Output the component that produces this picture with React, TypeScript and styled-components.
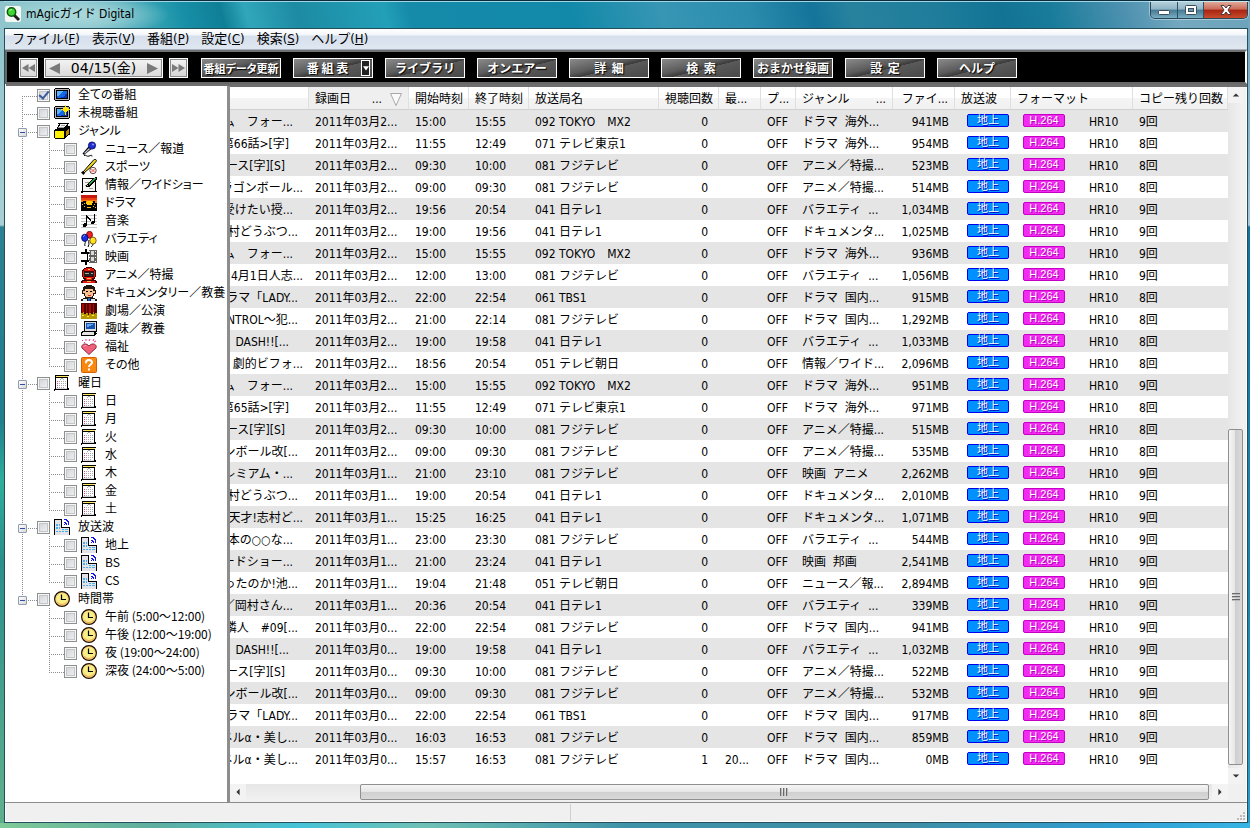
import React from "react";
import styled, { createGlobalStyle, css } from "styled-components";

const uiFont = `"DejaVu Sans Condensed", "Noto Sans CJK JP", sans-serif`;
const kanaFont = `"Noto Sans CJK JP", sans-serif`;

const GlobalStyle = createGlobalStyle`
  * { box-sizing: border-box; }
  body {
    margin: 0;
    font: 12px/18px ${uiFont};
    color: #000;
    background: #1f8197;
  }
  button, input { font: inherit; color: inherit; margin: 0; }
`;

/* ---------- window frame ---------- */

const Window = styled.div`
  min-height: 100vh;
  display: flex;
  flex-direction: column;
  padding: 0 2px 5px 4px;
  border-top: 1px solid #0d2a3c;
  background:
    linear-gradient(90deg, #7fca97 0%, #5fae9f 12%, #46c3d6 24%, #6fc0b4 34%, #3e93a8 50%, #3f8ea4 72%, #2f9fd4 90%, #37b4e4 100%) 0 100% / 100% 5px no-repeat,
    linear-gradient(180deg, #8fc4cd 0, #a3cdd3 180px, #a9d0d4 224px, #2b8191 226px, #1f7f8c 420px, #2fae9b 480px, #2a8f8b 560px, #5cae8c 800px) 0 0 / 4px 100% no-repeat,
    linear-gradient(180deg, #6fa4bb 0, #8db6cb 140px, #a9c9dc 224px, #13749a 226px, #1c86ac 600px, #2b9dcc 820px) 100% 0 / 2px 100% no-repeat,
    radial-gradient(ellipse 90px 22px at 80px 14px, #a9d9dc 0, #a9d9dc99 50%, #a9d9dc00 100%),
    linear-gradient(75deg, #8fc5cc 0%, #7cbcc6 7%, #2d9eb0 13%, #178fa7 15%, #0f7f96 18%, #31a6ba 20%, #1c8ba3 24%, #23a0b8 31%, #158aa9 33%, #1389a9 46%, #3796b4 53%, #2c8cad 60%, #14749a 65%, #27829e 68%, #1f7d9b 75%, #127394 80%, #1a7c9b 84%, #4f92b0 90%, #74a9bf 94%, #6ba3ba 100%) 0 0 / 100% 32px no-repeat,
    #1f8197;
`;

const TitleBar = styled.header`
  height: 27px;
  display: flex;
  align-items: flex-start;
  border-top: 1px solid #9fd8e2;
`;

const Caption = styled.h1`
  flex: 1;
  display: flex;
  align-items: center;
  gap: 5px;
  height: 24px;
  margin: 0;
  padding-left: 1px;
  font: 400 12px/24px ${uiFont};
`;

const WindowButtons = styled.div`
  display: flex;
  height: 17px;
  border: 1px solid #24485a;
  border-top: 0;
  border-radius: 0 0 5px 5px;
  overflow: hidden;
  box-shadow: 0 0 0 1px #ffffff66;
`;

const WindowButton = styled.button<{ $close?: boolean }>`
  width: ${(p) => (p.$close ? 44 : 26)}px;
  padding: 0;
  display: grid;
  place-items: center;
  border: 0;
  border-left: 1px solid #2b5166;
  background: ${(p) =>
    p.$close
      ? "linear-gradient(#e0a898, #cb6a58 45%, #a82412 50%, #c84c2c)"
      : "linear-gradient(#b4cfdb, #8fb4c5 45%, #467a93 50%, #79adc2)"};
  &:first-child { border-left: 0; }
`;

const Client = styled.div`
  flex: 1;
  display: flex;
  flex-direction: column;
  min-width: 0;
  border: 1px solid #24505e;
  background: #f0f0f0;
  box-shadow: inset 0 0 0 1px #fff;
`;

/* ---------- menu ---------- */

const MenuBar = styled.nav`
  display: flex;
  gap: 12px;
  height: 21px;
  padding: 0 7px;
  border-bottom: 1px solid #a9b2be;
  background: linear-gradient(#fff 0, #f3f6fa 6px, #d6dfec 7px, #dfe7f0 100%);
`;

const MenuItem = styled.button`
  padding: 0;
  border: 0;
  background: none;
  font-size: 13px;
  line-height: 20px;
  white-space: nowrap;
`;

/* ---------- toolbar ---------- */

const Toolbar = styled.div`
  display: flex;
  align-items: center;
  height: 34px;
  padding: 2px 0 0 12px;
  border: 2px solid #686868;
  border-right-color: #fff;
  border-top-color: #707070;
  background: #000;
`;

const DateGroup = styled.div`
  display: flex;
  gap: 6px;
  margin-right: 13px;
`;

const DateBox = styled.div`
  display: flex;
  align-items: center;
  justify-content: space-between;
  width: 119px;
  height: 20px;
  border: 1px solid #fff;
  outline: 1px solid #8a8a8a;
  outline-offset: -2px;
  background: linear-gradient(#f4f4f4, #d9d9d9);
  font: 14px/18px "DejaVu Sans", "Noto Sans CJK JP", sans-serif;
`;

const StepButton = styled.button<{ $framed?: boolean }>`
  display: grid;
  place-items: center;
  width: 19px;
  height: 20px;
  padding: 0;
  border: 0;
  background: none;
  ${(p) =>
    p.$framed &&
    css`
      border: 1px solid #fff;
      outline: 1px solid #8a8a8a;
      outline-offset: -2px;
      background: linear-gradient(#f4f4f4, #d4d4d4);
    `}
`;

const ToolButtons = styled.div`
  display: flex;
  gap: 12px;
`;

const ToolButton = styled.button<{ $dense?: boolean }>`
  display: flex;
  align-items: center;
  justify-content: center;
  width: 80px;
  height: 20px;
  padding: 0;
  border: 1px solid #fff;
  background: linear-gradient(166deg, #8a8a8a 0%, #5c5c5c 40%, #3a3a3a 54%, #5a5a5a 55%, #484848 100%);
  color: #fff;
  font: 700 ${(p) => (p.$dense ? 11 : 12)}px/18px ${kanaFont};
  font-feature-settings: ${(p) => (p.$dense ? `"palt"` : "normal")};
  text-shadow: 1px 1px 1px #000;
  white-space: pre;
`;

const DropMark = styled.span`
  display: grid;
  place-items: center;
  width: 9px;
  height: 16px;
  margin: 0 1px 0 13px;
  border: 1px solid #fff;
  background: #222;
`;

const DropLabel = styled.span`
  margin-left: 12px;
`;

/* ---------- body ---------- */

const Body = styled.main`
  flex: 1;
  display: flex;
  min-height: 0;
  border-top: 2px solid #6e6e6e;
  margin-left: 1px;
`;

const TreePane = styled.aside`
  flex: 0 0 224px;
  padding-left: 12px;
  border-right: 3px solid #8d8d8d;
  background: #fff;
`;

const TreeList = styled.ul`
  margin: 0;
  padding: 0;
  list-style: none;
`;

const TreeRow = styled.div`
  display: flex;
  height: 18px;
`;

const dotsDown = "repeating-linear-gradient(#8c8c8c 0 1px, #fff 1px 2px)";
const dotsAcross = "repeating-linear-gradient(90deg, #8c8c8c 0 1px, #fff 1px 2px)";

const Rail = styled.span<{ $line: boolean }>`
  width: 27px;
  background: ${(p) => (p.$line ? `${dotsDown} 4px 0 / 1px 100% no-repeat` : "none")};
`;

const Elbow = styled.span<{ $from: string; $height: string }>`
  width: 19px;
  padding-top: 6px;
  background:
    ${dotsAcross} 4px 10px / 15px 1px no-repeat,
    ${dotsDown} 4px ${(p) => p.$from} / 1px ${(p) => p.$height} no-repeat;
`;

const Expander = styled.button`
  display: grid;
  place-items: center;
  width: 9px;
  height: 9px;
  padding: 0;
  border: 1px solid #8e9cad;
  border-radius: 1px;
  background: linear-gradient(135deg, #fff, #d8d8d8);
  &::before {
    content: "";
    width: 5px;
    height: 1px;
    background: #2c4f9e;
  }
`;

const TreeLabel = styled.label`
  display: flex;
  align-items: center;
  gap: 4px;
  font: 12px/18px ${kanaFont};
  font-feature-settings: "palt";
  white-space: nowrap;
`;

const TreeText = styled.span`
  padding: 0 0 2px 4px;
  line-height: 16px;
`;

const Check = styled.input`
  appearance: none;
  display: grid;
  place-items: center;
  width: 13px;
  height: 13px;
  border: 1px solid #8e8f8f;
  background: linear-gradient(135deg, #cfd1d6, #f4f4f4);
  box-shadow: inset 0 0 0 1px #f6f6f6, inset 0 0 0 2px #c3c5c9;
  &:checked::before {
    content: "";
    width: 4px;
    height: 8px;
    margin-top: -2px;
    border: solid #3a5a9c;
    border-width: 0 2px 2px 0;
    transform: rotate(40deg);
  }
`;

/* ---------- list ---------- */

const ListPane = styled.section`
  flex: 1;
  min-width: 0;
  display: grid;
  grid-template-columns: minmax(0, 1fr) 16px;
  grid-template-rows: minmax(0, 1fr) 17px;
  padding: 0 3px 1px 0;
  border-top: 1px solid #6e6e6e;
`;

const ListView = styled.div`
  overflow: hidden;
  background: #fff;
`;

const Table = styled.table`
  width: 100%;
  table-layout: fixed;
  border-collapse: separate;
  border-spacing: 0;
`;

const HeadCell = styled.th<{ $sorted?: boolean }>`
  height: 23px;
  padding: 3px 0 0 6px;
  border-right: 1px solid #dedfe1;
  border-bottom: 1px solid #d0d0d0;
  background: ${(p) => (p.$sorted ? "#efefef" : "linear-gradient(#fff 0 50%, #f5f5f5 50%, #f0f0f1)")};
  font-weight: 400;
  line-height: 19px;
  text-align: left;
  white-space: nowrap;
  overflow: hidden;
`;

const HeadLine = styled.span<{ $room: number }>`
  display: flex;
  align-items: center;
  justify-content: space-between;
  padding-right: ${(p) => p.$room}px;
`;

const SortMark = styled.span`
  display: flex;
  align-items: center;
  gap: 8px;
`;

const Row = styled.tr`
  &:nth-child(odd) { background: #e5e5e5; }
`;

const Cell = styled.td<{ $right?: number }>`
  height: 22px;
  padding: 3px 0 0 6px;
  line-height: 19px;
  white-space: pre;
  overflow: hidden;
  ${(p) =>
    p.$right &&
    css`
      padding: 3px ${p.$right}px 0 0;
      text-align: right;
    `}
`;

/* Programme names run in from the scrolled-off part of the column. */
const NameTail = styled.div<{ $room: number }>`
  display: flex;
  justify-content: flex-end;
  height: 19px;
  margin-left: -6px;
  padding-right: ${(p) => p.$room}px;
  overflow: hidden;
`;

const BadgeLine = styled.div`
  display: flex;
  align-items: flex-start;
  gap: 24px;
  height: 19px;
  padding-left: 6px;
`;

const Badge = styled.span<{ $kind: "wave" | "codec" }>`
  width: 42px;
  height: 13px;
  margin-top: 1px;
  border: 1px solid ${(p) => (p.$kind === "wave" ? "#0000f0" : "#c400c4")};
  border-radius: 2px;
  background: ${(p) => (p.$kind === "wave" ? "#0090ff" : "#f22af2")};
  color: #fff;
  font: 11px/11px "Liberation Sans", ${kanaFont};
  text-align: center;
  text-shadow: 1px 1px 0 ${(p) => (p.$kind === "wave" ? "#0000c8" : "#b400b4")};
`;

/* ---------- scroll bars ---------- */

const ScrollTrack = styled.div<{ $vertical?: boolean }>`
  display: flex;
  flex-direction: ${(p) => (p.$vertical ? "column" : "row")};
  padding: ${(p) => (p.$vertical ? "0 1px 0 0" : "0 0 1px 0")};
  background: ${(p) =>
    p.$vertical ? "linear-gradient(90deg, #e6e6e6, #f2f2f2)" : "linear-gradient(#e6e6e6, #f2f2f2)"};
`;

const ScrollArrow = styled.button`
  flex: 0 0 16px;
  display: grid;
  place-items: center;
  padding: 0;
  border: 0;
  background: #f3f3f3;
`;

const ScrollGap = styled.span<{ $share: number }>`
  flex: ${(p) => p.$share} 0 0;
`;

const ScrollThumb = styled.span<{ $share: number; $vertical?: boolean }>`
  flex: ${(p) => p.$share} 0 0;
  display: flex;
  flex-direction: ${(p) => (p.$vertical ? "column" : "row")};
  align-items: center;
  justify-content: center;
  gap: 1px;
  border: 1px solid #8f8f8f;
  border-radius: 2px;
  background: linear-gradient(${(p) => (p.$vertical ? "90deg" : "180deg")}, #f5f5f5, #e6e6e6 48%, #cfcfcf 50%, #d9d9d9);
`;

const Grip = styled.i<{ $vertical?: boolean }>`
  width: ${(p) => (p.$vertical ? 8 : 2)}px;
  height: ${(p) => (p.$vertical ? 2 : 8)}px;
  background: ${(p) =>
    p.$vertical ? "linear-gradient(#6a6a6a 50%, #bbb 50%)" : "linear-gradient(90deg, #6a6a6a 50%, #bbb 50%)"};
`;

const Corner = styled.div`
  background: #f0f0f0;
`;

/* ---------- status bar ---------- */

const StatusBar = styled.footer`
  display: flex;
  justify-content: space-between;
  align-items: flex-end;
  height: 20px;
  padding: 1px 2px 1px 0;
  border-top: 1px solid #8c8c8c;
`;

const StatusCell = styled.span`
  flex: 0 0 566px;
  align-self: stretch;
  border-right: 1px solid #cfcfcf;
`;

/* ---------- drawings ---------- */

const Svg = styled.svg`
  display: block;
  flex: none;
`;

const Pix = ({ children }: { children: React.ReactNode }) => (
  <Svg width="16" height="16" viewBox="0 0 16 16" shapeRendering="crispEdges" aria-hidden="true">
    {children}
  </Svg>
);

const Smooth = ({ children }: { children: React.ReactNode }) => (
  <Svg width="16" height="16" viewBox="0 0 16 16" aria-hidden="true">
    {children}
  </Svg>
);

const monitor = (
  <>
    <path d="M1 1h14v1h1v11h-1v1H1v-1H0V2h1z" fill="#000" />
    <path d="M1 2h14v11H1z" fill="#b8b8b8" />
    <path d="M2 3h12v9H2z" fill="#000" />
    <path d="M3 4h10v7H3z" fill="#1468e8" />
    <path d="M3 4h6v1H8v1H7v1H6v1H5v1H3z" fill="#5cb4ff" />
    <path d="M11 7h2v4H7v-1h3V9h1z" fill="#0838b8" />
  </>
);

const calendar = (
  <>
    <path d="M1 0h14v1h-1v12h1v2H1v1H0v-2h1V1z" fill="#000" />
    <path d="M2 1h12v1H2z" fill="#ffe860" />
    <path d="M2 3h11v10H2z" fill="#fff" />
    <path d="M1 14h13v1H1z" fill="#000" />
    <path d="M2 13h11v1H2z" fill="#d8d8e0" />
    <path d="M7 3h2v1H7zM6 4h1v1H6zM9 4h1v1H9zM5 6h1v1H5zM7 6h1v1H7zM9 6h1v1H9zM11 6h1v1h-1zM5 8h1v1H5zM7 8h1v1H7zM9 8h1v1H9zM11 8h1v1h-1zM5 10h1v1H5zM7 10h1v1H7zM9 10h1v1H9zM11 10h1v1h-1zM5 12h1v1H5zM7 12h1v1H7zM9 12h1v1H9z" fill="#a8a8b0" />
    <path d="M3 6h1v1H3zM3 8h1v1H3zM3 10h1v1H3zM3 12h1v1H3z" fill="#e84878" />
  </>
);

const antenna = (
  <>
    <path d="M0 0h8v8h8v8h-1V9H7V1H1v15H0z" fill="#000" />
    <path d="M1 1h6v8h8v7H1z" fill="#e4e4e8" />
    <path d="M2 5h2v2H2zM5 5h1v2H5zM2 8h2v2H2zM5 8h1v2H5zM2 12h2v1H2zM5 12h2v1H5zM8 12h2v1H8zM11 12h3v1h-3zM8 10h2v1H8zM11 10h3v1h-3z" fill="#48b0f0" />
    <path d="M10 0h3v1h1v1h1v4h-1V3h-1V2h-1V1h-2zM10 3h2v1h1v2h-1V5h-1V4h-1zM10 5h1v1h-1z" fill="#1010e8" />
  </>
);

const clock = (
  <>
    <circle cx="8" cy="8" r="7.3" fill="#f8ee88" stroke="#201000" strokeWidth="1.4" />
    <path d="M3 11a6 6 0 0 0 10 0" fill="none" stroke="#f0a850" strokeWidth="1.2" />
    <circle cx="8" cy="8" r="6.2" fill="none" stroke="#f6c070" strokeWidth=".7" />
    <path d="M7.5 3.5v5H12" fill="none" stroke="#000" strokeWidth="1.2" />
  </>
);

const icons: Record<string, React.ReactNode> = {
  all: <Pix>{monitor}</Pix>,
  unseen: (
    <Pix>
      {monitor}
      <path d="M11 0h1v3h1v1h3v1h-3v1h-1v4h-1V6h-1V5H7V4h3V3h1z" fill="#ffe800" />
      <path d="M10 2h3v5h-3zM9 3h5v3H9z" fill="#ffe800" />
    </Pix>
  ),
  genre: (
    <Pix>
      <path d="M4 0h11v1h-1v2h2v9h-2v1h-1v1h-1v1h-1v1H1v-1H0V7h1V6h2V4h1V2h1V1H4z" fill="#000" />
      <path d="M6 1h7v1h-1v1h-1v1H5V3h1z" fill="#f4f4f4" />
      <path d="M7 2h4v1H6zM4 4h6v1H3z" fill="#a0a0a0" />
      <path d="M1 8h9v7H1z" fill="#fff000" />
      <path d="M12 8h1V7h1V6h1v5h-1v1h-1v1h-1z" fill="#b88800" />
    </Pix>
  ),
  news: (
    <Smooth>
      <path d="M1.5 12.500l6-7 3 2.500-7.500 6z" fill="#000" />
      <path d="M3 12l5.500-5.500 1 1L4 12.800z" fill="#c8c8d8" />
      <circle cx="11" cy="4.500" r="3.600" fill="#2030d0" stroke="#000060" strokeWidth=".8" />
      <circle cx="12" cy="3.500" r="1" fill="#90a0ff" />
      <path d="M3 14.500c2-1 3 1.500 5 .6s3-1.500 3 .4" fill="none" stroke="#000" />
    </Smooth>
  ),
  sports: (
    <Smooth>
      <path d="M2 13L9 5l4-4.500c1-1 3 .5 2.200 1.800L11 7l-8 7z" fill="#f0dc20" stroke="#000" strokeWidth="1" />
      <path d="M0 13.500l2-1.500 2 2-1.500 2z" fill="#000" />
      <circle cx="12" cy="11.500" r="3.200" fill="#fff" stroke="#603028" strokeWidth=".9" />
      <path d="M10.500 10c1 .5 1 2.500 0 3.200M13.500 10c-1 .5-1 2.500 0 3.200" stroke="#e03020" fill="none" />
    </Smooth>
  ),
  info: (
    <Pix>
      <path d="M1 1h14v13h1v1H2v1H0v-2h1z" fill="#000" />
      <path d="M2 2h12v12H2z" fill="#f4f4f0" />
      <path d="M4 5h4v1H4zM4 8h3v1H4zM8 11h4v1H8z" fill="#a0a0a0" />
      <path d="M14 0h2v3h-1v1h-1v1h-1v1h-1v1h-1v1h-1v1H9v1H5V8h1V7h1V6h1V5h1V4h1V3h1V2h1V1h2z" fill="#000" />
      <path d="M13 1h2v1h-1v1h-1v1h-1v1h-1v1h-1v1H9v1H8V6h1V5h1V4h1V3h1V2h1z" fill="#30a848" />
      <path d="M6 8h1v1H6z" fill="#f0c080" />
    </Pix>
  ),
  drama: (
    <Pix>
      <path d="M0 0h16v16H0z" fill="#c81810" />
      <path d="M0 3h16v2H0z" fill="#e84010" />
      <path d="M0 5h16v3H0z" fill="#f87810" />
      <path d="M6 6h5v1h1v3H5V7h1z" fill="#ffc810" />
      <path d="M0 7h2V6h3v3h1v1h5V8h1V6h2v2h2v8H0z" fill="#000" />
      <path d="M1 9h1v1H1zM3 8h1v1H3zM3 11h1v1H3zM13 9h1v1h-1zM12 11h1v1h-1zM14 12h1v1h-1zM6 12h4v1H6z" fill="#f8c020" />
    </Pix>
  ),
  music: (
    <Pix>
      <path d="M0 2h16v1H0zM0 5h16v1H0zM0 8h16v1H0zM0 11h16v1H0zM0 14h16v1H0z" fill="#c4c4c4" />
      <path d="M5 2h1v1h1v1h1v1h1v1h1v2H9V7H8V6H7V5H6v8H5v1H2v-3h1v-1h2zM13 1h1v9h-1v1h-3V9h1V8h2z" fill="#000" />
    </Pix>
  ),
  variety: (
    <Smooth>
      <path d="M4 10c1 2-1 3 0 5M8 9c-1 3 1 3-1 7M12 13c0 1-1 2-2 3" stroke="#000" fill="none" />
      <ellipse cx="8.500" cy="3.800" rx="3" ry="3.500" fill="#f02020" stroke="#600000" strokeWidth=".8" />
      <ellipse cx="3.800" cy="6.800" rx="3.200" ry="3.600" fill="#1830e0" stroke="#000050" strokeWidth=".8" />
      <ellipse cx="12" cy="9.600" rx="3.200" ry="3.500" fill="#ffe020" stroke="#604000" strokeWidth=".8" />
      <path d="M2.500 5.500l1-1M10.500 8.500l1-1" stroke="#fff" />
    </Smooth>
  ),
  movie: (
    <Pix>
      <path d="M4 0h2v3H4zM0 3h9v2H0zM0 11h9v2H0zM4 12h2v4H4zM6 4h1v8H6z" fill="#000" />
      <path d="M8 1h8v13H8z" fill="#606060" />
      <path d="M10 2h3v4h-3zM10 8h3v4h-3z" fill="#d8d8d8" />
      <path d="M8 2h1v1H8zM8 5h1v1H8zM8 8h1v1H8zM8 12h1v1H8zM14 2h1v1h-1zM14 5h1v1h-1zM14 8h1v1h-1zM14 12h1v1h-1z" fill="#fff" />
    </Pix>
  ),
  anime: (
    <Pix>
      <path d="M5 0h6v1h2v1h1v1h1v7h-1v2h-1v1h2v1h1v2H0v-2h1v-1h2v-1H2v-2H1V3h1V2h1V1h2z" fill="#400000" />
      <path d="M5 1h6v1h2v2H3V2h2zM3 10h10v1h-2v2H5v-2H3zM2 14h12v2H2z" fill="#e81810" />
      <path d="M2 4h1v6H2zM13 4h1v6h-1z" fill="#e81810" />
      <path d="M3 5h10v4H3z" fill="#202020" />
      <path d="M4 6h4v1H4zM10 6h2v1h-2z" fill="#a8a8a8" />
      <path d="M7 2h2v1H7zM6 11h4v1H6zM6 14h4v1H6z" fill="#ffb840" />
    </Pix>
  ),
  docu: (
    <Pix>
      <path d="M5 0h6v1h2v1h1v3h1v4h-2v2h-1v2h2v1h2v2H0v-2h2v-1h2v-2H3V9H1V5h1V2h1V1h2z" fill="#201810" />
      <path d="M4 4h8v2h2v2h-2v3h-1v1H5v-1H4V8H2V6h2z" fill="#f8c090" />
      <path d="M5 6h2v1H5zM9 6h2v1H9z" fill="#000" />
      <path d="M7 10h3v1H7z" fill="#d03020" />
      <path d="M2 14h4v2H2zM10 14h4v2h-4z" fill="#d8e8f8" />
      <path d="M7 13h2v3H7z" fill="#2060c0" />
    </Pix>
  ),
  stage: (
    <Pix>
      <path d="M0 0h16v16H0z" fill="#500000" />
      <path d="M1 1h2v9H1zM5 1h1v9H5zM8 1h2v9H8zM12 1h1v9h-1z" fill="#a80808" />
      <path d="M0 10h2V9h1v2h2v-1h2v2h1v-2h2v1h2V9h1v2h1v-1h2v6H0z" fill="#b89800" />
      <path d="M1 12h2v1H1zM6 13h2v1H6zM11 12h2v1h-2z" fill="#ffec40" />
    </Pix>
  ),
  hobby: (
    <Pix>
      <path d="M3 0h13v11h-1v1h1v1h-1v1h-1v1H0v-4h1v-1h2z" fill="#000" />
      <path d="M4 1h11v9H4z" fill="#d8dce0" />
      <path d="M5 2h9v6H5z" fill="#1850b0" />
      <path d="M6 3h6v1h-2v1H8v1H6z" fill="#60a8f0" />
      <path d="M2 11h11v1H2zM1 12h12v2H1z" fill="#e4e4e4" />
    </Pix>
  ),
  welfare: (
    <Smooth>
      <path d="M8 15.500L1 9C-.5 5.500 4.500 3 8 7c3.500-4 8.500-1.500 7 2z" fill="#f06078" stroke="#802038" strokeWidth=".9" />
      <path d="M3 7.500c.5-1 1.500-1.200 2.300-1" stroke="#ffc0c8" fill="none" />
      <path d="M1 1l1 1M5 0v2M9 0l-1 2M13 0l-1 2M3 3l1 1M15 2l-2 1" stroke="#f03090" />
    </Smooth>
  ),
  other: (
    <Smooth>
      <rect x=".5" y=".5" width="15" height="15" rx="1" fill="#f88810" stroke="#d86000" />
      <path d="M5 6.200V5.500C5 2 11 2 11 5.500c0 2-3 2-3 4.500" fill="none" stroke="#fff" strokeWidth="2" />
      <path d="M7 11.500h2v2H7z" fill="#fff" />
    </Smooth>
  ),
  day: <Pix>{calendar}</Pix>,
  wave: <Pix>{antenna}</Pix>,
  time: <Smooth>{clock}</Smooth>,
};

const Triangle = ({ d, size = 10, color = "#7a7a7a" }: { d: string; size?: number; color?: string }) => (
  <Svg width={size} height={size} viewBox="0 0 10 10" aria-hidden="true">
    <path d={d} fill={color} />
  </Svg>
);

/* ---------- data ---------- */

type Node = { name: string; icon: string; checked?: boolean; children?: Node[] };

const kids = (icon: string, names: string[]): Node[] => names.map((name) => ({ name, icon }));

const tree: Node[] = [
  { name: "全ての番組", icon: "all", checked: true },
  { name: "未視聴番組", icon: "unseen" },
  {
    name: "ジャンル",
    icon: "genre",
    children: [
      { name: "ニュース／報道", icon: "news" },
      { name: "スポーツ", icon: "sports" },
      { name: "情報／ワイドショー", icon: "info" },
      { name: "ドラマ", icon: "drama" },
      { name: "音楽", icon: "music" },
      { name: "バラエティ", icon: "variety" },
      { name: "映画", icon: "movie" },
      { name: "アニメ／特撮", icon: "anime" },
      { name: "ドキュメンタリー／教養", icon: "docu" },
      { name: "劇場／公演", icon: "stage" },
      { name: "趣味／教養", icon: "hobby" },
      { name: "福祉", icon: "welfare" },
      { name: "その他", icon: "other" },
    ],
  },
  { name: "曜日", icon: "day", children: kids("day", ["日", "月", "火", "水", "木", "金", "土"]) },
  { name: "放送波", icon: "wave", children: kids("wave", ["地上", "BS", "CS"]) },
  {
    name: "時間帯",
    icon: "time",
    children: kids("time", ["午前 (5:00～12:00)", "午後 (12:00～19:00)", "夜 (19:00～24:00)", "深夜 (24:00～5:00)"]),
  },
];

const stations: Record<string, string> = {
  "092": "092 TOKYO　MX2",
  "071": "071 テレビ東京1",
  "081": "081 フジテレビ",
  "041": "041 日テレ1",
  "061": "061 TBS1",
  "051": "051 テレビ朝日",
};

const genres: Record<string, string> = {
  overseas: "ドラマ  海外...",
  domestic: "ドラマ  国内...",
  anime: "アニメ／特撮...",
  variety: "バラエティ  ...",
  docu: "ドキュメンタ...",
  info: "情報／ワイド...",
  cinemaAnime: "映画  アニメ",
  cinemaJapan: "映画  邦画",
  news: "ニュース／報...",
};

/* name, free room after the name, month digit, start, end, station, genre, size, copies left */
type Rec = [string, number, number, string, string, string, string, string, number];

const recordings: Rec[] = [
  ["ム　フォー...", 16, 2, "15:00", "15:55", "092", "overseas", "941", 9],
  ["第66話>[字]", 20, 2, "11:55", "12:49", "071", "overseas", "954", 8],
  ["ース[字][S]", 24, 2, "09:30", "10:00", "081", "anime", "523", 8],
  ["ラゴンボール...", 6, 2, "09:00", "09:30", "081", "anime", "514", 8],
  ["受けたい授...", 16, 2, "19:56", "20:54", "041", "variety", "1,034", 9],
  ["村どうぶつ...", 11, 2, "19:00", "19:56", "041", "docu", "1,025", 9],
  ["ム　フォー...", 16, 2, "15:00", "15:55", "092", "overseas", "936", 9],
  ["4月1日人志...", 6, 2, "12:00", "13:00", "081", "variety", "1,056", 9],
  ["ラマ「LADY...", 11, 2, "22:00", "22:54", "061", "domestic", "915", 8],
  ["NTROL～犯...", 11, 2, "21:00", "22:14", "081", "domestic", "1,292", 8],
  ["DASH!![...", 20, 2, "19:00", "19:58", "041", "variety", "1,033", 8],
  ["劇的ビフォ...", 6, 2, "18:56", "20:54", "051", "info", "2,096", 8],
  ["ム　フォー...", 16, 2, "15:00", "15:55", "092", "overseas", "951", 9],
  ["第65話>[字]", 20, 2, "11:55", "12:49", "071", "overseas", "971", 8],
  ["ース[字][S]", 24, 2, "09:30", "10:00", "081", "anime", "515", 8],
  ["ンボール改[...", 11, 2, "09:00", "09:30", "081", "anime", "535", 8],
  ["レミアム・...", 16, 1, "21:00", "23:10", "081", "cinemaAnime", "2,262", 9],
  ["村どうぶつ...", 11, 1, "19:00", "20:54", "041", "docu", "2,010", 9],
  ["天才!志村ど...", 6, 1, "15:25", "16:25", "041", "docu", "1,071", 9],
  ["本の○○な...", 16, 1, "23:00", "23:30", "081", "variety", "544", 9],
  ["ードショー...", 16, 1, "21:00", "23:24", "041", "cinemaJapan", "2,541", 9],
  ["ったのか!池...", 11, 1, "19:04", "21:48", "051", "news", "2,894", 9],
  ["／岡村さん...", 16, 1, "20:36", "20:54", "041", "variety", "339", 9],
  ["隣人　#09[...", 11, 0, "22:00", "22:54", "081", "domestic", "941", 9],
  ["DASH!![...", 20, 0, "19:00", "19:58", "041", "variety", "1,032", 9],
  ["ース[字][S]", 24, 0, "09:30", "10:00", "081", "anime", "522", 9],
  ["ンボール改[...", 11, 0, "09:00", "09:30", "081", "anime", "532", 9],
  ["ラマ「LADY...", 11, 0, "22:00", "22:54", "061", "domestic", "917", 8],
  ["ネルα・美し...", 11, 0, "16:03", "16:53", "081", "domestic", "859", 9],
  ["ネルα・美し...", 11, 0, "15:57", "16:53", "081", "domestic", "0", 9],
];

const columnWidths = [79, 100, 60, 60, 130, 60, 42, 35, 97, 62, 56, 122];

const menus: [string, string][] = [
  ["ファイル", "F"],
  ["表示", "V"],
  ["番組", "P"],
  ["設定", "C"],
  ["検索", "S"],
  ["ヘルプ", "H"],
];

/* ---------- parts ---------- */

const NodeLabel = ({ node }: { node: Node }) => (
  <TreeLabel>
    <Check type="checkbox" defaultChecked={node.checked} />
    {icons[node.icon]}
    <TreeText>{node.name}</TreeText>
  </TreeLabel>
);

const Tree = () => (
  <TreeList>
    {tree.map((node, i) => {
      const last = i === tree.length - 1;
      return (
        <li key={node.name}>
          <TreeRow>
            <Elbow $from={i === 0 ? "10px" : "0px"} $height={last ? "10px" : "100%"}>
              {node.children && <Expander aria-label={`${node.name}を閉じる`} />}
            </Elbow>
            <NodeLabel node={node} />
          </TreeRow>
          {node.children && (
            <TreeList>
              {node.children.map((child, j) => (
                <li key={child.name}>
                  <TreeRow>
                    <Rail $line={!last} />
                    <Elbow $from="0px" $height={j === node.children!.length - 1 ? "10px" : "100%"} />
                    <NodeLabel node={child} />
                  </TreeRow>
                </li>
              ))}
            </TreeList>
          )}
        </li>
      );
    })}
  </TreeList>
);

const RecordingTable = () => (
  <Table>
    <colgroup>
      {columnWidths.map((w, i) => (
        <col key={i} width={w} />
      ))}
      <col />
    </colgroup>
    <thead>
      <tr>
        <HeadCell />
        <HeadCell $sorted>
          <HeadLine $room={6}>
            録画日
            <SortMark>
              ...
              <Svg width="12" height="13" viewBox="0 0 12 13" aria-hidden="true">
                <path d="M.5 .5h11L6 12.500z" fill="#fafafa" stroke="#a8a8a8" />
              </Svg>
            </SortMark>
          </HeadLine>
        </HeadCell>
        <HeadCell>開始時刻</HeadCell>
        <HeadCell>終了時刻</HeadCell>
        <HeadCell>放送局名</HeadCell>
        <HeadCell>視聴回数</HeadCell>
        <HeadCell>最...</HeadCell>
        <HeadCell>プ...</HeadCell>
        <HeadCell>
          <HeadLine $room={6}>
            <span>ジャンル</span>
            <span>...</span>
          </HeadLine>
        </HeadCell>
        <HeadCell>
          <HeadLine $room={6}>
            <span />
            <span>ファイ...</span>
          </HeadLine>
        </HeadCell>
        <HeadCell>放送波</HeadCell>
        <HeadCell>フォーマット</HeadCell>
        <HeadCell>コピー残り回数</HeadCell>
      </tr>
    </thead>
    <tbody>
      {recordings.map(([name, room, month, start, end, station, genre, size, copies], i) => {
        const watched = i === recordings.length - 1;
        return (
          <Row key={i}>
            <Cell>
              <NameTail $room={room}>{name}</NameTail>
            </Cell>
            <Cell>{`2011年03月${month}...`}</Cell>
            <Cell>{start}</Cell>
            <Cell>{end}</Cell>
            <Cell>{stations[station]}</Cell>
            <Cell $right={11}>{watched ? 1 : 0}</Cell>
            <Cell>{watched ? "20..." : ""}</Cell>
            <Cell>OFF</Cell>
            <Cell>{genres[genre]}</Cell>
            <Cell $right={6}>{`${size}MB`}</Cell>
            <Cell>
              <BadgeLine>
                <Badge $kind="wave">地上</Badge>
              </BadgeLine>
            </Cell>
            <Cell>
              <BadgeLine>
                <Badge $kind="codec">H.264</Badge>
                <span>HR10</span>
              </BadgeLine>
            </Cell>
            <Cell>{`${copies}回`}</Cell>
          </Row>
        );
      })}
    </tbody>
  </Table>
);

const App = () => (
  <>
    <GlobalStyle />
    <Window>
      <TitleBar>
        <Caption>
          <Svg width="16" height="16" viewBox="0 0 16 16" aria-hidden="true">
            <rect width="16" height="16" rx="2" fill="#f4f8f4" />
            <path d="M9 9l5 5" stroke="#202020" strokeWidth="3" />
            <circle cx="6.500" cy="6" r="4.200" fill="#40d830" stroke="#0a5a10" strokeWidth="1.500" />
            <path d="M4.500 5c.5-1 1.500-1.500 2.500-1.300" stroke="#d0ffc0" fill="none" />
          </Svg>
          mAgicガイド Digital
        </Caption>
        <WindowButtons>
          <WindowButton aria-label="最小化">
            <Svg width="12" height="10" viewBox="0 0 12 10">
              <rect x=".5" y="5.500" width="11" height="4" rx="1" fill="#fff" stroke="#3c4c58" />
            </Svg>
          </WindowButton>
          <WindowButton aria-label="最大化">
            <Svg width="12" height="10" viewBox="0 0 12 10">
              <rect x=".5" y=".5" width="11" height="9" rx="1" fill="#fff" stroke="#3c4c58" />
              <rect x="3.500" y="3.500" width="5" height="3" fill="#6f9cb2" stroke="#3c4c58" />
            </Svg>
          </WindowButton>
          <WindowButton $close aria-label="閉じる">
            <Svg width="12" height="10" viewBox="0 0 12 10">
              <path d="M1 .5h3l2 2.500L8 .5h3L8 5l3 4.500H8L6 7 4 9.500H1L4 5z" fill="#fff" stroke="#4c3838" />
            </Svg>
          </WindowButton>
        </WindowButtons>
      </TitleBar>
      <Client>
        <MenuBar>
          {menus.map(([name, key]) => (
            <MenuItem key={key}>
              {name}(<u>{key}</u>)
            </MenuItem>
          ))}
        </MenuBar>
        <Toolbar>
          <DateGroup>
            <StepButton $framed aria-label="前の週">
              <Svg width="13" height="8" viewBox="0 0 13 8">
                <path d="M6.500 0v8L0 4zM13 0v8L6.500 4z" fill="#7a7a7a" />
              </Svg>
            </StepButton>
            <DateBox>
              <StepButton aria-label="前の日">
                <Triangle d="M10 0v10L0 5z" size={11} />
              </StepButton>
              04/15(金)
              <StepButton aria-label="次の日">
                <Triangle d="M0 0v10l10-5z" size={11} />
              </StepButton>
            </DateBox>
            <StepButton $framed aria-label="次の週">
              <Svg width="13" height="8" viewBox="0 0 13 8">
                <path d="M0 0v8l6.500-4zM6.500 0v8L13 4z" fill="#7a7a7a" />
              </Svg>
            </StepButton>
          </DateGroup>
          <ToolButtons>
            <ToolButton $dense>番組データ更新</ToolButton>
            <ToolButton>
              <DropLabel>番 組 表</DropLabel>
              <DropMark>
                <Triangle d="M0 2h10L5 9z" size={6} color="#fff" />
              </DropMark>
            </ToolButton>
            <ToolButton>ライブラリ</ToolButton>
            <ToolButton>オンエアー</ToolButton>
            <ToolButton>{"詳  細"}</ToolButton>
            <ToolButton>{"検  索"}</ToolButton>
            <ToolButton>おまかせ録画</ToolButton>
            <ToolButton>{"設  定"}</ToolButton>
            <ToolButton>ヘルプ</ToolButton>
          </ToolButtons>
        </Toolbar>
        <Body>
          <TreePane>
            <Tree />
          </TreePane>
          <ListPane>
            <ListView>
              <RecordingTable />
            </ListView>
            <ScrollTrack $vertical>
              <ScrollArrow aria-label="上へ">
                <Triangle d="M1 7h8L5 3z" size={8} color="#333" />
              </ScrollArrow>
              <ScrollGap $share={326} />
              <ScrollThumb $vertical $share={334}>
                <Grip $vertical />
                <Grip $vertical />
                <Grip $vertical />
              </ScrollThumb>
              <ScrollGap $share={3} />
              <ScrollArrow aria-label="下へ">
                <Triangle d="M1 3h8L5 7z" size={8} color="#333" />
              </ScrollArrow>
            </ScrollTrack>
            <ScrollTrack>
              <ScrollArrow aria-label="左へ">
                <Triangle d="M7 1v8L3 5z" size={8} color="#333" />
              </ScrollArrow>
              <ScrollGap $share={114} />
              <ScrollThumb $share={849}>
                <Grip />
                <Grip />
                <Grip />
              </ScrollThumb>
              <ScrollGap $share={3} />
              <ScrollArrow aria-label="右へ">
                <Triangle d="M3 1v8l4-4z" size={8} color="#333" />
              </ScrollArrow>
            </ScrollTrack>
            <Corner />
          </ListPane>
        </Body>
        <StatusBar>
          <StatusCell />
          <Svg width="9" height="9" viewBox="0 0 9 9" aria-hidden="true">
            <path d="M7 0h2v2H7zM4 3h2v2H4zM7 3h2v2H7zM1 6h2v2H1zM4 6h2v2H4zM7 6h2v2H7z" fill="#bcbcbc" />
          </Svg>
        </StatusBar>
      </Client>
    </Window>
  </>
);

export default App;
